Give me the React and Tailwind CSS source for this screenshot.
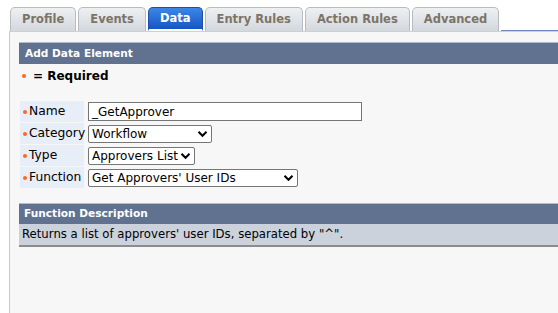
import React from "react";

const Chevron = () => (
  <svg width="11" height="8" viewBox="0 0 11 8" className="shrink-0">
    <path d="M1.5 1.8 L5.5 5.8 L9.5 1.8" fill="none" stroke="#000" strokeWidth="2" />
  </svg>
);

function Select({ value, w }) {
  return (
    <div className={`flex items-center justify-between border border-[#767676] bg-white rounded-[2px] h-[18px] pl-[3px] pr-[3px] ${w}`}>
      <span className="text-[12px] leading-none text-black whitespace-nowrap">{value}</span>
      <Chevron />
    </div>
  );
}

function Row({ label, children }) {
  return (
    <div className="flex gap-[2px] h-[21px]">
      <div className="w-[64px] shrink-0 bg-[#e8eef7] flex items-center pl-[3px] text-[12.3px] text-black whitespace-nowrap">
        <span className="w-[4px] h-[4px] shrink-0 rounded-full bg-[#ff6a1a] mr-[2px]"></span>
        {label}
      </div>
      <div className="flex items-center pl-[2px]">{children}</div>
    </div>
  );
}

const tabs = ["Profile", "Events", "Data", "Entry Rules", "Action Rules", "Advanced"];

export default function App() {
  return (
    <div className="w-[558px] h-[313px] bg-white overflow-hidden" style={{ fontFamily: "'DejaVu Sans', Verdana, sans-serif" }}>
      <div className="flex items-end h-[31px] pl-[10px] gap-[2px]">
        {tabs.map((t) => {
          const active = t === "Data";
          return (
            <div
              key={t}
              className={
                active
                  ? "h-[24px] px-[11px] flex items-center rounded-t-[5px] border border-[#1d4fa8] bg-gradient-to-b from-[#3d86e6] to-[#1655c4] text-white font-bold text-[11.5px] border-b-2 border-b-white"
                  : "h-[24px] px-[11px] flex items-center rounded-t-[5px] border border-b-0 border-[#b8bcc2] bg-gradient-to-b from-[#eef0f2] to-[#d3d8de] text-[#7c7468] font-bold text-[11.5px]"
              }
            >
              {t}
            </div>
          );
        })}
        <div className="flex-1 h-full border-b border-[#7384bf]"></div>
      </div>
      <div className="ml-[9px] border-l border-t border-[#c8c8c8] border-t-[#d0d0d0] bg-[#f7f7f7] h-[282px] pt-[10px] pl-[9px]">
        <div className="h-[22px] bg-[#60728f] border-t border-[#b8bcc8] flex items-center pl-[6px] text-white font-bold text-[10.6px]">
          Add Data Element
        </div>
        <div className="flex items-center h-[24px] pl-[3px] text-[12px] font-bold text-black">
          <span className="w-[4px] h-[4px] rounded-full bg-[#ff6a1a] mr-[7px]"></span>= Required
        </div>
        <div className="flex flex-col gap-[1px] mt-[13px] pl-[1px]">
          <Row label="Name">
            <div className="w-[274px] h-[19px] border border-[#767676] bg-white flex items-center pl-[3px] text-[12px]">_GetApprover</div>
          </Row>
          <Row label="Category">
            <Select value="Workflow" w="w-[124px]" />
          </Row>
          <Row label="Type">
            <Select value="Approvers List" w="w-[107px]" />
          </Row>
          <Row label="Function">
            <Select value="Get Approvers' User IDs" w="w-[210px]" />
          </Row>
        </div>
        <div className="mt-[15px] h-[21px] bg-[#60728f] border-t border-[#b8bcc8] flex items-center pl-[5px] text-white font-bold text-[10.6px]">
          Function Description
        </div>
        <div className="h-[23px] bg-[#cbd2dc] border-b-2 border-[#8c8c8c] flex items-center pl-[3px] text-[11.7px] text-black">
          Returns a list of approvers' user IDs, separated by "^".
        </div>
      </div>
    </div>
  );
}
